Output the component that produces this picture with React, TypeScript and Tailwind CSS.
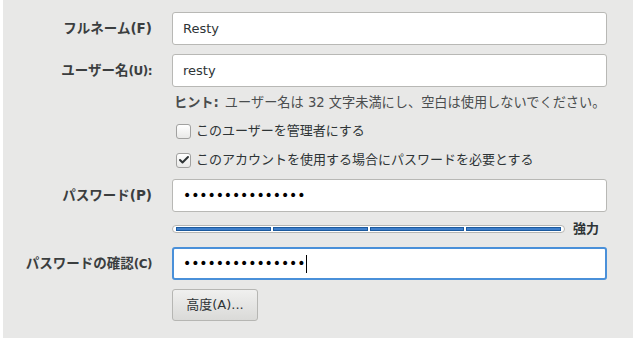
import { Check } from 'lucide-react';

const font = { fontFamily: '"DejaVu Sans", "Noto Sans CJK JP", sans-serif' };

function Label({ children, className = '' }: { children: React.ReactNode; className?: string }) {
  return (
    <div className={`flex items-center justify-end text-[13.5px] font-semibold text-[#3b3e3f] ${className}`}>
      {children}
    </div>
  );
}

function Field({ value, focused }: { value: string; focused?: boolean }) {
  const secret = value.startsWith('•');
  return (
    <div
      className={`flex h-[33px] items-center rounded-[3px] bg-white text-[13px] text-[#2e3436] ${
        focused ? 'border-2 border-[#4a90d9] px-[9px]' : 'border border-[#b8b8b5] px-[10px]'
      }`}
    >
      <span className={secret ? 'text-[14px] tracking-[-0.1px] text-black' : ''}>{value}</span>
      {focused && <span className="ml-[1px] h-[18px] w-px bg-black" />}
    </div>
  );
}

function Checkbox({ checked, label }: { checked?: boolean; label: string }) {
  return (
    <div className="flex items-center gap-[5px] text-[13px] text-[#2e3436]">
      <div className="ml-[4px] flex h-[15px] w-[15px] items-center justify-center rounded-[3px] border border-[#a1a1a0] bg-gradient-to-b from-white to-[#e9e9e8]">
        {checked && <Check className="h-[12px] w-[12px] text-[#2e3436]" strokeWidth={4} />}
      </div>
      <span>{label}</span>
    </div>
  );
}

export default function App() {
  const dots = '•••••••••••••••';
  return (
    <div className="h-[341px] w-[639px] bg-white" style={font}>
      <div className="ml-[3px] h-[338px] w-[630px] bg-[#e8e8e7]">
        <div className="grid grid-cols-[149px_435px] gap-x-5 pt-[12px]">
          <Label>フルネーム(F)</Label>
          <Field value="Resty" />

          <Label className="mt-[9px]">
            ユーザー名<span className="text-[12px] font-bold tracking-[-0.5px]">(U):</span>
          </Label>
          <div className="mt-[9px]">
            <Field value="resty" />
          </div>

          <div />
          <div className="mt-[8px] flex h-[16px] items-center pl-[2px] text-[13.2px] text-[#4a4d4e]">
            <span className="font-bold">ヒント:</span>
            <span className="ml-[6px]">ユーザー名は 32 文字未満にし、空白は使用しないでください。</span>
          </div>

          <div />
          <div className="mt-[10px] flex h-[20px] items-center">
            <Checkbox label="このユーザーを管理者にする" />
          </div>

          <div />
          <div className="mt-[9px] flex h-[20px] items-center">
            <Checkbox checked label="このアカウントを使用する場合にパスワードを必要とする" />
          </div>

          <Label className="mt-[9px]">パスワード(P)</Label>
          <div className="mt-[9px]">
            <Field value={dots} />
          </div>

          <div />
          <div className="mt-[7px] flex h-[20px] w-[440px] items-center">
            <div className="flex h-[8px] w-[393px] items-center gap-[2px] rounded-full border border-[#b6b6b3] bg-white px-[3px]">
              <div className="h-[4px] flex-1 border border-[#1c5a9e] bg-[#3f7fcb]" />
              <div className="h-[4px] flex-1 border border-[#1c5a9e] bg-[#3f7fcb]" />
              <div className="h-[4px] flex-1 border border-[#1c5a9e] bg-[#3f7fcb]" />
              <div className="h-[4px] flex-1 border border-[#1c5a9e] bg-[#3f7fcb]" />
            </div>
            <span className="ml-[8px] text-[13px] font-bold text-[#2e3436]">強力</span>
          </div>

          <Label className="mt-[8px]">
            パスワードの確認<span className="text-[12px] tracking-[-0.5px]">(C)</span>
          </Label>
          <div className="mt-[8px]">
            <Field value={dots} focused />
          </div>

          <div />
          <div className="mt-[9px]">
            <button className="flex h-[32px] w-[86px] items-center justify-center rounded-[3px] border border-[#b6b6b3] bg-gradient-to-b from-[#f0f0ef] to-[#dadad8] text-[13px] text-[#2e3436]">
              高度(A)...
            </button>
          </div>
        </div>
      </div>
    </div>
  );
}
